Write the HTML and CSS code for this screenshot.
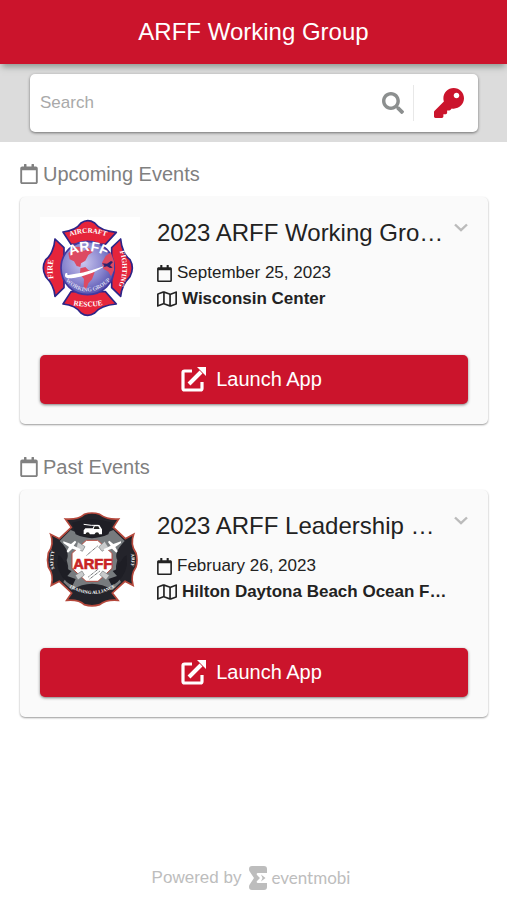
FILE: index.html
```html
<!DOCTYPE html>
<html lang="en">
<head>
<meta charset="utf-8">
<meta name="viewport" content="width=device-width, initial-scale=1">
<title>ARFF Working Group</title>
<link rel="stylesheet" href="styles.css">
</head>
<body>
<svg class="sprite" aria-hidden="true">
  <symbol id="calendar" viewBox="0 0 448 512"><path d="M400 64h-48V12c0-6.600-5.400-12-12-12h-40c-6.600 0-12 5.400-12 12v52H160V12c0-6.600-5.400-12-12-12h-40c-6.600 0-12 5.400-12 12v52H48C21.500 64 0 85.500 0 112v352c0 26.500 21.500 48 48 48h352c26.500 0 48-21.500 48-48V112c0-26.500-21.500-48-48-48zm-6 400H54c-3.300 0-6-2.700-6-6V160h352v298c0 3.300-2.700 6-6 6z"/></symbol>
  <symbol id="map" viewBox="0 0 576 512"><path d="M560.020 32c-1.960 0-3.980.370-5.960 1.160L384.010 96H384L212 35.280A64.252 64.252 0 0 0 191.760 32c-6.690 0-13.370 1.050-19.810 3.140L20.120 87.950A32.006 32.006 0 0 0 0 117.660v346.320C0 473.170 7.530 480 15.990 480c1.960 0 3.970-.370 5.960-1.160L192 416l172 60.710a63.980 63.980 0 0 0 40.050.150l151.830-52.810A31.996 31.996 0 0 0 576 394.340V48.020c0-9.190-7.530-16.020-15.980-16.020zM224 90.420l128 45.190v285.970l-128-45.190V90.420zM48 418.050V129.070l128-44.530v286.200l-.640.230L48 418.050zm480-35.130l-128 44.530V141.260l.640-.240L528 93.950v288.970z"/></symbol>
  <symbol id="launch" viewBox="0 0 25 25"><path d="M11 4H3.500Q2 4 2 5.500V21.500Q2 23 3.500 23H19.500Q21 23 21 21.500V15" fill="none" stroke="currentColor" stroke-width="3.200"/><path d="M8 17L20 5" fill="none" stroke="currentColor" stroke-width="4"/><path d="M16 0H25V9Z"/></symbol>
  <symbol id="chevron" viewBox="0 0 14 9"><path d="M1 1.500L7 7.200L13 1.500" fill="none" stroke="currentColor" stroke-width="2.400"/></symbol>
</svg>

<header class="topbar"><h1>ARFF Working Group</h1></header>

<div class="searchband">
  <form class="searchbox" role="search">
    <input class="search-input" type="text" placeholder="Search" aria-label="Search">
    <button class="icon-button search-button" type="button" aria-label="Search">
      <svg viewBox="0 0 512 512"><path d="M505 442.700L405.300 343c-4.500-4.500-10.600-7-17-7H372c27.600-35.300 44-79.700 44-128C416 93.100 322.900 0 208 0S0 93.100 0 208s93.100 208 208 208c48.300 0 92.700-16.400 128-44v16.300c0 6.400 2.500 12.500 7 17l99.700 99.700c9.400 9.400 24.600 9.400 33.900 0l28.300-28.300c9.400-9.400 9.400-24.600.1-34zM208 336c-70.700 0-128-57.200-128-128 0-70.700 57.200-128 128-128 70.700 0 128 57.200 128 128 0 70.700-57.200 128-128 128z"/></svg>
    </button>
    <button class="icon-button key-button" type="button" aria-label="Event code">
      <svg viewBox="0 0 512 512"><path d="M512 176C512 273.200 433.200 352 336 352c-11.220 0-22.190-1.060-32.830-3.070l-24.010 27.010A24 24 0 0 1 261.220 384H224v40c0 13.250-10.750 24-24 24h-40v40c0 13.250-10.750 24-24 24H24c-13.250 0-24-10.750-24-24v-78.060c0-6.360 2.530-12.470 7.030-16.970l161.800-161.800C163.110 213.810 160 195.270 160 176 160 78.800 238.800 0 336 0 433.490 0 512 78.510 512 176zM336 128c0 26.510 21.490 48 48 48s48-21.490 48-48-21.490-48-48-48-48 21.490-48 48z"/></svg>
    </button>
  </form>
</div>

<main class="content">
  <section class="group">
    <h2 class="group-title"><svg><use href="#calendar"/></svg>Upcoming Events</h2>
    <article class="card">
      <div class="summary">
        <svg class="emblem" viewBox="6 12 300 300" role="img" aria-label="Aircraft Rescue Fire Fighting emblem">
          <defs>
            <radialGradient id="globe" cx=".42" cy=".4" r=".62"><stop offset="0" stop-color="#c9c6ee"/><stop offset=".6" stop-color="#8986cf"/><stop offset="1" stop-color="#5551ad"/></radialGradient>
            <path id="arc-top" d="M84 75Q149 44 216 75"/>
            <path id="arc-bottom" d="M90 273Q149 289 210 272"/>
            <path id="arc-left" d="M51 218Q36 165 53 120"/>
            <path id="arc-right" d="M239 100Q269 165 236 234"/>
            <path id="arc-name" d="M83 136Q152 92 218 138"/>
            <path id="arc-base" d="M76 197Q149 275 224 195"/>
          </defs>
          <g fill="#e5243b" stroke="#2c2588" stroke-width="5" stroke-linejoin="round">
            <path d="M75 57C103 54 120 43 129 30Q149 16 170 30C180 44 203 55 235 58L202 94H99Z"/>
            <path d="M75 273C103 276 120 287 129 300Q149 314 170 300C180 287 203 276 235 273L202 236H99Z"/>
            <path d="M51 78C49 106 37 130 23 140Q9 165 23 191C37 205 49 225 51 250L78 224V104Z"/>
            <path d="M248 78C250 106 262 130 276 140Q290 165 276 191C262 205 250 225 248 250L221 224V104Z"/>
          </g>
          <circle cx="149" cy="165" r="80" fill="url(#globe)" stroke="#4038a0" stroke-width="5"/>
          <g fill="#dd4a62">
            <path d="M91 121L111 102L128 101L137 114L153 104L164 117L151 126L142 143L129 151L127 162L116 159L108 145L95 139Z"/>
            <path d="M127 166L142 162L151 171L170 178L162 199L151 211L144 231L137 220L138 198L126 184Z"/>
            <path d="M203 129L218 118L228 145V172L219 190L211 176L196 167L192 149Z"/>
          </g>
          <path d="M83 180C75 196 90 199 118 193C150 187 178 174 205 157C166 171 131 182 95 185Q85 188 88 180Z" fill="#fff"/>
          <path d="M192 151L207 152L219 144L225 147L216 157L224 164L216 165L207 160L195 163L199 157Z" fill="#28236f"/>
          <g class="emblem-text">
            <text font-size="21" fill="#fff"><textPath href="#arc-top" startOffset="50%">AIRCRAFT</textPath></text>
            <text font-size="22" fill="#fff"><textPath href="#arc-bottom" startOffset="50%">RESCUE</textPath></text>
            <text font-size="24" fill="#fff"><textPath href="#arc-left" startOffset="50%">FIRE</textPath></text>
            <text font-size="21" fill="#fff"><textPath href="#arc-right" startOffset="50%">FIGHTING</textPath></text>
            <text class="emblem-name" font-size="42" fill="#fff"><textPath href="#arc-name" startOffset="50%">ARFF</textPath></text>
            <text font-size="17" fill="#d9d8ee"><textPath href="#arc-base" startOffset="50%">WORKING GROUP</textPath></text>
          </g>
        </svg>
        <div class="details">
          <h3 class="event-title">2023 ARFF Working Gro…</h3>
          <p class="meta"><svg class="meta-date"><use href="#calendar"/></svg>September 25, 2023</p>
          <p class="meta venue"><svg class="meta-map"><use href="#map"/></svg>Wisconsin Center</p>
        </div>
        <button class="icon-button expand" type="button" aria-label="Show details"><svg><use href="#chevron"/></svg></button>
      </div>
      <button class="launch" type="button"><svg><use href="#launch"/></svg>Launch App</button>
    </article>
  </section>

  <section class="group">
    <h2 class="group-title"><svg><use href="#calendar"/></svg>Past Events</h2>
    <article class="card">
      <div class="summary">
        <svg class="emblem" viewBox="6 15 300 300" role="img" aria-label="ARFF training emblem">
          <defs>
            <path id="arc2-bottom" d="M88 243Q162 291 237 243"/>
            <path id="arc2-left" d="M51 197Q40 165 51 133"/>
            <path id="arc2-right" d="M275 133Q286 165 275 197"/>
          </defs>
          <path d="M82 42C110 44 128 38 139 28Q162 20 185 28C199 38 216 44 242 42L226 67L262 101L287 88C279 110 284 131 294 144Q300 165 294 186C284 200 279 219 285 241L261 229L223 264L240 286C216 284 198 288 185 299Q162 306 139 299C128 288 110 284 86 286L101 264L64 229L40 241C46 219 41 200 31 186Q26 165 31 144C41 131 46 110 38 88L64 101L100 67Z" fill="#24242b" stroke="#b5483c" stroke-width="5"/>
          <path d="M98 75Q162 105 226 75L260 108Q225 145 238 165Q225 205 249 231L224 255Q162 218 101 255L76 231Q100 205 86 165Q98 139 65 108Z" fill="#777b7e"/>
          <g fill="#1e1e25">
            <path d="M61 151C79 159 73 174 87 173Q80 191 101 198L88 213L113 222L103 243Q65 220 58 179Z"/>
            <path d="M266 151C248 159 254 174 239 173Q245 191 224 198L237 213L211 222L222 243Q260 220 267 179Z"/>
            <path d="M102 53Q162 32 224 53L211 88Q162 111 113 88Z"/>
          </g>
          <path d="M145 106H179L222 145V190L180 229H144L102 190V145Z" fill="#fff" stroke="#b64a40" stroke-width="3"/>
          <g stroke="#777b7e" stroke-width="2" fill="#c9cbcc">
            <path d="M119 110L141 125L133 139L115 128ZM200 109L182 126L192 139L211 126ZM120 225L139 210L132 198L112 211ZM204 225L185 209L194 198L214 211Z"/>
          </g>
          <g fill="none" stroke="#4b4e50" stroke-width="3" stroke-dasharray="3 2"><path d="M146 151L179 123M151 216L181 192M155 222L186 198"/></g>
          <g fill="#fff">
            <path d="M76 109L99 117L111 107L115 111L107 122L129 133L122 138L103 131L90 143L86 139L93 126L76 114Z"/>
            <path d="M249 109L226 117L214 107L210 111L218 122L196 133L203 138L222 131L235 143L239 139L232 126L249 114Z"/>
            <path d="M142 70H164L169 60H184L192 73V88H183Q176 80 169 88H155Q149 80 143 87H137V76Z"/>
          </g>
          <path d="M137 58L160 61H181" fill="none" stroke="#fff" stroke-width="3"/>
          <g fill="#222"><path d="M170 64H181L185 72H167Z"/><circle cx="149" cy="88" r="6"/><circle cx="177" cy="88" r="6"/></g>
          <g class="emblem-text">
            <text class="emblem-bold" x="164" y="192" font-size="44" fill="#c92425" stroke="#c92425" stroke-width="2">ARFF</text>
            <text font-size="14" fill="#fff"><textPath href="#arc2-bottom" startOffset="50%">TRAINING ALLIANCE</textPath></text>
            <text font-size="14" fill="#fff"><textPath href="#arc2-left" startOffset="50%">SAFETY</textPath></text>
            <text font-size="14" fill="#fff"><textPath href="#arc2-right" startOffset="50%">ARFF</textPath></text>
          </g>
        </svg>
        <div class="details">
          <h3 class="event-title">2023 ARFF Leadership …</h3>
          <p class="meta"><svg class="meta-date"><use href="#calendar"/></svg>February 26, 2023</p>
          <p class="meta venue"><svg class="meta-map"><use href="#map"/></svg>Hilton Daytona Beach Ocean F…</p>
        </div>
        <button class="icon-button expand" type="button" aria-label="Show details"><svg><use href="#chevron"/></svg></button>
      </div>
      <button class="launch" type="button"><svg><use href="#launch"/></svg>Launch App</button>
    </article>
  </section>
</main>

<footer class="footer">
  <span>Powered by</span>
  <a class="brand" href="#"><svg viewBox="0 0 18 24" aria-hidden="true"><path d="M3 0H15Q18 0 18 3V7H9Q7 7 8 9L11 12L8 15Q7 17 9 17H18V21Q18 24 15 24H3Q0 24 0 21Q0 19 1 18L5 12L1 6Q0 5 0 3Q0 0 3 0Z"/><path d="M12 8.500L16.500 12L12 15.500L13.500 12Z"/></svg>eventmobi</a>
</footer>
</body>
</html>
```
FILE: styles.css
```css
* {
  box-sizing: border-box;
}

body {
  margin: 0;
  min-height: 100vh;
  display: flex;
  flex-direction: column;
  background: #fff;
  color: #222;
  font-family: "Liberation Sans", Arial, sans-serif;
  font-size: 17px;
}

h1, h2, h3, p {
  margin: 0;
  font-weight: 400;
}

svg {
  display: block;
  flex: none;
  fill: currentColor;
}

button, input {
  font: inherit;
  border: 0;
  padding: 0;
  background: none;
}

.sprite {
  position: absolute;
  width: 0;
  height: 0;
}

.topbar {
  position: relative;
  display: flex;
  align-items: center;
  justify-content: center;
  height: 64px;
  background: #cb142c;
  color: #fff;
  box-shadow: 0 5px 6px -2px rgba(70, 90, 75, 0.5);
}

.topbar h1 {
  font-size: 24px;
  line-height: 32px;
}

.searchband {
  padding: 10px 29px 10px 30px;
  background: #dcdcdc;
}

.searchbox {
  display: flex;
  align-items: center;
  height: 58px;
  padding: 0 14px 0 10px;
  border-radius: 5px;
  background: #fff;
  box-shadow: 0 1px 3px rgba(0, 0, 0, 0.5);
}

.search-input {
  flex: 1;
  min-width: 0;
  height: 40px;
  outline: 0;
  color: #222;
}

.search-input::placeholder {
  color: #a9a9a9;
  opacity: 1;
}

.icon-button {
  display: flex;
  align-items: center;
  justify-content: flex-end;
}

.search-button {
  height: 36px;
  padding-right: 9px;
  border-right: 1px solid #e8e8e8;
  color: #8c8f8f;
}

.search-button svg {
  width: 22px;
  height: 22px;
}

.key-button {
  width: 50px;
  color: #cb142c;
}

.key-button svg {
  width: 30px;
  height: 30px;
}

.content {
  display: flex;
  flex-direction: column;
  gap: 30px;
  padding: 19px 19px 19px 20px;
}

.group-title {
  display: flex;
  align-items: center;
  gap: 5px;
  margin-bottom: 10px;
  color: #808080;
  font-size: 20px;
  line-height: 26px;
}

.group-title svg {
  width: 18px;
  height: 20px;
}

.card {
  padding: 20px;
  border-radius: 5px;
  background: #fafafa;
  box-shadow: 0 1px 2px rgba(0, 0, 0, 0.4);
}

.summary {
  display: flex;
  align-items: flex-start;
  margin-bottom: 38px;
}

.emblem {
  width: 100px;
  height: 100px;
  margin-right: 17px;
  background: #fff;
}

.emblem-text {
  font-family: "Liberation Serif", serif;
  font-weight: 700;
  text-anchor: middle;
}

.emblem-name,
.emblem-bold {
  font-family: "Liberation Sans", sans-serif;
}

.details {
  flex: 1;
  min-width: 0;
}

.event-title {
  margin-bottom: 11px;
  overflow: hidden;
  font-size: 24px;
  line-height: 32px;
  text-overflow: ellipsis;
  white-space: nowrap;
}

.meta {
  display: flex;
  align-items: center;
  gap: 5px;
  line-height: 26px;
  white-space: nowrap;
}

.venue {
  font-weight: 700;
}

.meta-date {
  width: 15px;
  height: 17px;
}

.meta-map {
  width: 20px;
  height: 18px;
}

.expand {
  width: 19px;
  height: 20px;
  color: #bbb;
}

.expand svg {
  width: 14px;
  height: 9px;
}

.launch {
  display: flex;
  align-items: center;
  justify-content: center;
  gap: 10px;
  width: 100%;
  height: 49px;
  padding-right: 5px;
  border-radius: 5px;
  background: #cb142c;
  box-shadow: 0 1px 3px rgba(0, 0, 0, 0.5);
  color: #fff;
  font-size: 20px;
}

.launch svg {
  width: 25px;
  height: 25px;
}

.footer {
  display: flex;
  align-items: center;
  justify-content: center;
  gap: 8px;
  margin-top: auto;
  padding: 0 5px 10px 0;
  color: #bdbdbd;
  line-height: 24px;
}

.brand {
  display: flex;
  align-items: center;
  gap: 4px;
  color: inherit;
  font-family: Lato, sans-serif;
  font-size: 17px;
  text-decoration: none;
}

.brand svg {
  width: 18px;
  height: 24px;
}
```
